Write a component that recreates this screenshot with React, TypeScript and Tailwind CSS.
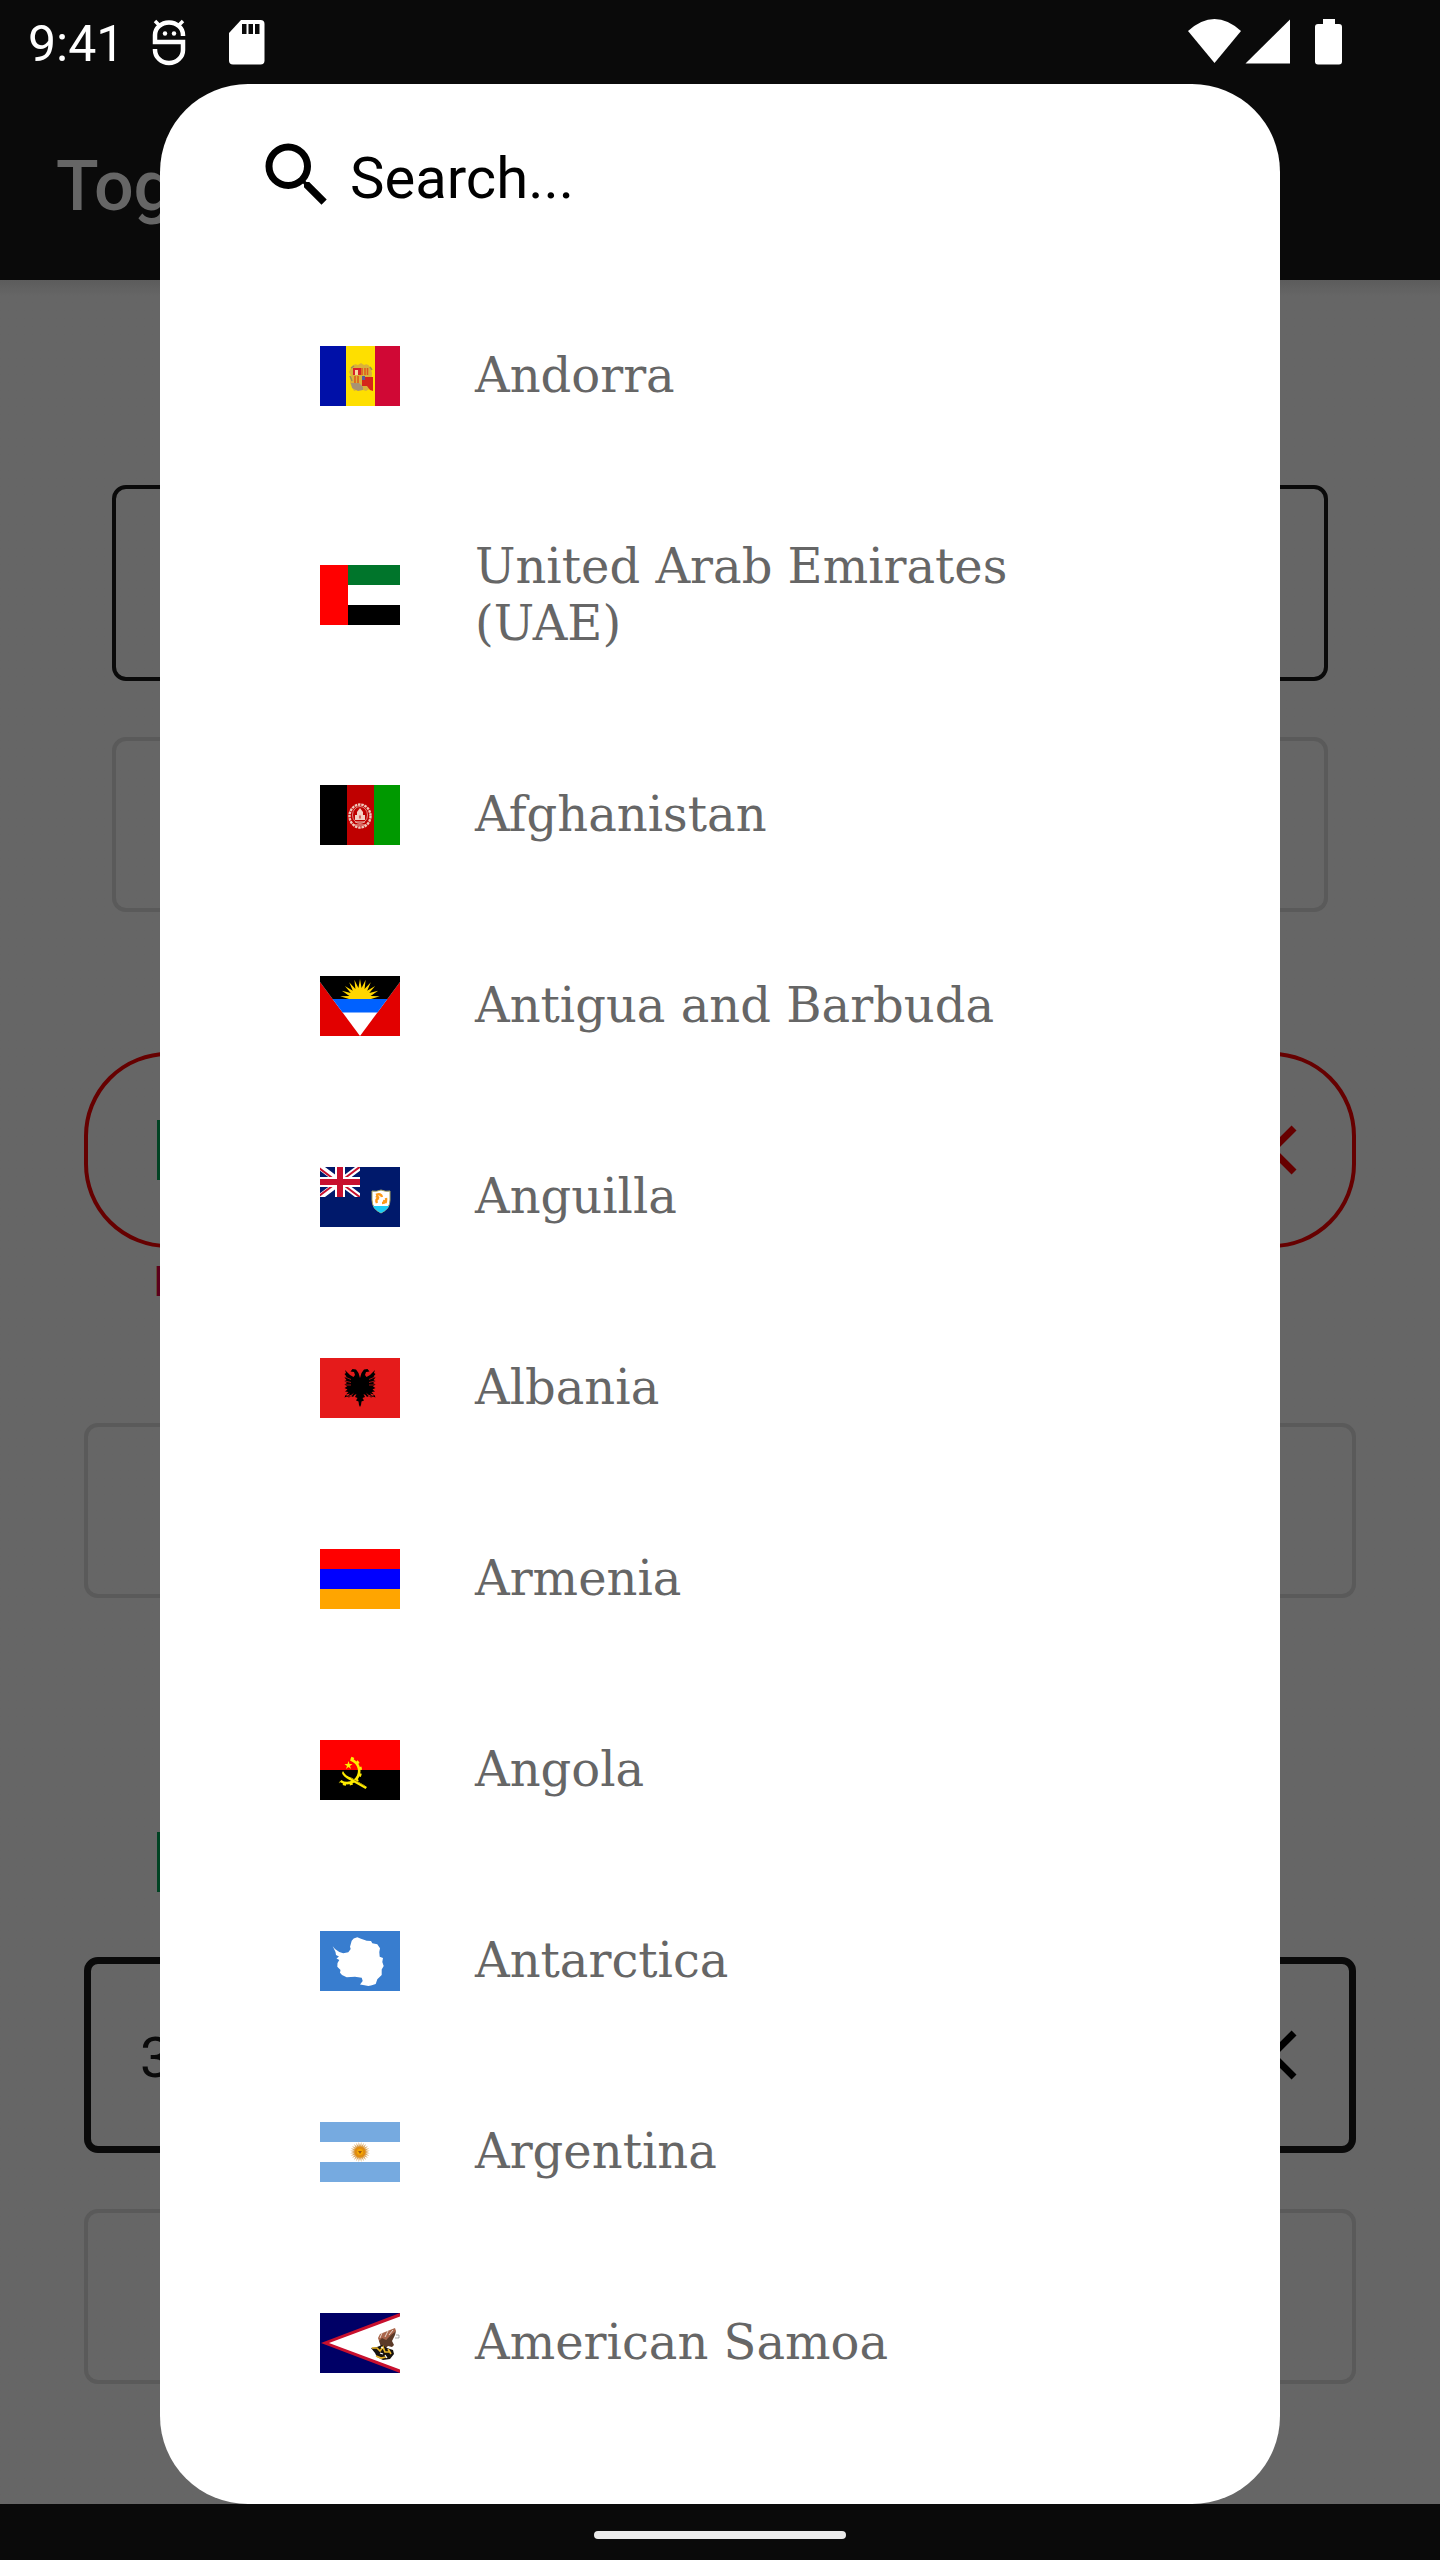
import React, { useState } from "react";

const ray = (cx: number, cy: number, inner: number, outer: number, count: number, from: number, to: number) => {
  const points: string[] = [];
  const step = (to - from) / (count * 2);
  for (let i = 0; i <= count * 2; i++) {
    const a = ((from + i * step) * Math.PI) / 180;
    const r = i % 2 === 0 ? inner : outer;
    points.push(`${(cx + r * Math.cos(a)).toFixed(2)},${(cy + r * Math.sin(a)).toFixed(2)}`);
  }
  return points.join(" ");
};

const Andorra = () => (
  <>
    <rect width="26" height="60" fill="#0010a8" />
    <rect x="26" width="29" height="60" fill="#fedf00" />
    <rect x="55" width="25" height="60" fill="#d00835" />
    <path d="M32 20q3-3 6-1l3-2 3 2q4-2 6 2l2 6-1 15-5 3-6-2-6 2-4-8 1-7-2-4z" fill="#d9b23a" />
    <path d="M31 22l3-2M50 21l2 3M30 30l2 5" stroke="#9d8a5a" strokeWidth="1.5" fill="none" />
    <rect x="33" y="22" width="8" height="7" fill="#d8202a" />
    <rect x="35" y="24" width="3" height="5" fill="#f6d9a0" />
    <path d="M42 22v7M45 22v7M47.500 22v7M35 30v7M38 30v7" stroke="#e0561d" strokeWidth="1.500" />
    <path d="M42 31h11v14l-3-1-3-4h-5z" fill="#d6261a" />
    <path d="M31 37h8l4 4v3l-5 1-6-3z" fill="#a89272" />
    <path d="M42 30h3v4h-3z" fill="#5a5a9a" />
  </>
);

const Emirates = () => (
  <>
    <rect width="80" height="60" fill="#fff" />
    <rect width="80" height="20" fill="#00752b" />
    <rect y="40" width="80" height="20" fill="#000" />
    <rect width="28" height="60" fill="#f00" />
  </>
);

const Afghanistan = () => (
  <>
    <rect width="27" height="60" fill="#000" />
    <rect x="27" width="27" height="60" fill="#bf0000" />
    <rect x="54" width="26" height="60" fill="#090" />
    <ellipse cx="40" cy="31" rx="10.500" ry="11.500" fill="none" stroke="#f0c8bb" strokeWidth="2.400" strokeDasharray="2.500 .8" />
    <ellipse cx="40" cy="30" rx="7.500" ry="8.500" fill="none" stroke="#dc8a80" strokeWidth="1" />
    <path d="M40 23l3 4v3h2v5h-10v-5h2v-3z" fill="#f2cfc4" />
    <path d="M39 30h2v4h-2zM35 37h10M34 40h12" fill="#bf0000" stroke="#f0c8bb" strokeWidth="1" />
  </>
);

const Antigua = () => (
  <>
    <rect width="80" height="60" fill="#e20000" />
    <path d="M0 0h80v6L40 60 0 6z" fill="#fff" />
    <path d="M0 0h80v6L67.400 23H12.600L0 6z" fill="#000" />
    <polygon points={ray(40, 23, 11, 20, 11, 180, 360)} fill="#ffd600" />
    <path d="M12.600 23h54.800L57.400 36.500H22.600z" fill="#0061ff" />
  </>
);

const Anguilla = () => (
  <>
    <rect width="80" height="60" fill="#00196b" />
    <svg width="40" height="30" viewBox="0 0 40 30">
      <path d="M0 0l40 30M40 0L0 30" stroke="#fff" strokeWidth="6" />
      <path d="M-1 1l20 15M21 14L41-1M-1 29l20-15M21 16l20 15" stroke="#c8102e" strokeWidth="2" />
      <path d="M20 0v30M0 15h40" stroke="#fff" strokeWidth="10" />
      <path d="M20 0v30M0 15h40" stroke="#c8102e" strokeWidth="6" />
    </svg>
    <path d="M52 24q4 1 9-1 5 2 9 1v9q0 9-9 13-9-4-9-13z" fill="#fff" stroke="#a8a45c" strokeWidth="1" />
    <path d="M53 39h16q-2 4-8 7-6-3-8-7z" fill="#1ccbf5" />
    <path d="M56 28q5-2 6 2M66 31q1 5-4 5M57 36q-2-4 2-5M56 29l3 2M63 34l4 1" fill="none" stroke="#ff9a17" strokeWidth="2.500" />
  </>
);

const Albania = () => (
  <>
    <rect width="80" height="60" fill="#e51b1b" />
    <path
      d="M40 20L38.500 15 36 11.500 32.500 11 30.500 13.500 34 14 35 17 33.500 19 30 17 25 12 26 15 24.500 16 26.500 18.500 24.500 19.500 26.500 22 24.500 23 27 25 24.500 26.500 27 28.500 24.500 30 27.500 31.500 25 33.500 28.500 34 26 36.500 30 35.500 27.500 38.500 32 36.500 34 34.500 32 37.500 29.500 38.500 25.500 37 24.500 39.500 27 38.500 29 39.500 31 38 33 39 34.500 37 36.500 36 35 39 37.500 40 36 42.500 38.500 43.500 39 47 40 49 41 47 41.500 43.500 44 42.500 42.500 40 45 39 43.500 36 45.500 37 47 39 49 38 51 39.500 53 38.500 55.500 39.500 54.500 37 50.500 38.500 48 37.500 46 34.500 48 36.500 52.500 38.500 50 35.500 54 36.500 51.500 34 55 33.500 52.500 31.500 55.500 30 53 28.500 55.500 26.500 53 25 55.500 23 53.500 22 55.500 19.500 53.500 18.500 55.500 16 54 15 55 12 50 17 46.500 19 45 17 46 14 49.500 13.500 47.500 11 44 11.500 41.500 15z"
      fill="#000"
    />
    <path d="M25 19l6 2.500M25 23l6 1.500M25 27l6 0M55 19l-6 2.500M55 23l-6 1.500M55 27l-6 0" stroke="#e51b1b" strokeWidth=".7" />
  </>
);

const Armenia = () => (
  <>
    <rect width="80" height="20" fill="#f00" />
    <rect y="20" width="80" height="20" fill="#00f" />
    <rect y="40" width="80" height="20" fill="#ffa500" />
  </>
);

const Angola = () => (
  <>
    <rect width="80" height="30" fill="#f00" />
    <rect y="30" width="80" height="30" fill="#000" />
    <path d="M30.500 19.500A12 12 0 1 1 20.500 41" fill="none" stroke="#ffec00" strokeWidth="2.600" />
    <path d="M31 18A13.500 13.500 0 1 1 19.500 42" fill="none" stroke="#ffec00" strokeWidth="2.500" strokeDasharray="3 3.600" />
    <path d="M23 31q2 5 9 7l15 9-1.500 2-15-8.500Q23 37 22 33z" fill="#ffec00" />
    <path d="M31 38l14 8" stroke="#a88f00" strokeWidth="1" />
    <polygon points="28.500,21 29.500,24 32.500,24 30,26 31,29 28.500,27 26,29 27,26 24.500,24 27.500,24" fill="#ffec00" />
  </>
);

const Antarctica = () => (
  <>
    <rect width="80" height="60" fill="#387dcf" />
    <path
      d="M12.700 15.300L15 18 19.300 21 23.300 22.300 28.300 21.300 30.700 18 30 15.700 31.700 9.700 33.700 7.500 37.300 6.300 40.300 7.500 46.700 9.700 51 10 52.300 12.300 57.300 13.300 60 17.300 59.300 21 59.700 25.700 63 27 62.300 31 63.700 35 61.700 38.500 61.700 44 57.300 48.300 55.700 53 51 54.500 48.300 55 44.500 54.300 40 53.500 42.700 50 41.700 46.700 35 45.700 26.700 46.300 22 44 20 41.700 20.500 39 17.300 35.700 17.500 32 19.300 29 16.500 27.500 19 25.500 16 24 15.500 21z"
      fill="#fff"
    />
  </>
);

const Argentina = () => (
  <>
    <rect width="80" height="60" fill="#76aae0" />
    <rect y="20" width="80" height="20" fill="#fff" />
    <polygon points={ray(40, 30, 6, 10, 24, 0, 360)} fill="#d9a45c" />
    <circle cx="40" cy="30" r="5.500" fill="#e08c10" />
    <circle cx="40" cy="30" r="3" fill="#f6a800" />
    <path d="M38 29h4l-2 3z" fill="#a05a10" />
  </>
);

const Samoa = () => (
  <>
    <rect width="80" height="60" fill="#006" />
    <path d="M1 30L80 0v60z" fill="#c8102e" />
    <path d="M9 30L80 3.500v53z" fill="#fff" />
    <path d="M58 25l2-4 5-2 5-2 5-2 1 3-4 5-4 3-5 3-4-1z" fill="#a9654a" />
    <path d="M59 28l3-3 4 2 5-5 5-4-1 4-3 6 2 4-2 2-4-1-3 3-4-2z" fill="#5b3a28" />
    <path d="M60 25l2-5M65 24l3-6M69 22l4-5" stroke="#e8d8cc" strokeWidth="1" />
    <path d="M51 35l6-1 5-2 5 3 6 2 1 4-4 5-7 1-6-3-2-4z" fill="#18130f" />
    <path d="M52 35l5 0 3 3 3-4 2 5 5 0M56 43l5 2 5-1M68 36l3 5" stroke="#e8b52a" strokeWidth="1.700" fill="none" />
    <path d="M60 40l3 1M65 42l2 3M61 34l2 1" stroke="#fff" strokeWidth="1.200" />
    <path d="M76 22l3 0 0 3-4 0" stroke="#888" strokeWidth=".7" fill="none" />
  </>
);

const countries: { name: string; flag: () => React.JSX.Element }[] = [
  { name: "Andorra", flag: Andorra },
  { name: "United Arab Emirates (UAE)", flag: Emirates },
  { name: "Afghanistan", flag: Afghanistan },
  { name: "Antigua and Barbuda", flag: Antigua },
  { name: "Anguilla", flag: Anguilla },
  { name: "Albania", flag: Albania },
  { name: "Armenia", flag: Armenia },
  { name: "Angola", flag: Angola },
  { name: "Antarctica", flag: Antarctica },
  { name: "Argentina", flag: Argentina },
  { name: "American Samoa", flag: Samoa },
];

function StatusBar() {
  return (
    <header className="flex h-[84px] items-start justify-between bg-[#0a0a0a] pr-[97px] pl-7 text-white">
      <div className="flex items-start">
        <span className="mt-4 text-[50px] leading-14">9:41</span>
        <svg className="mt-[18px] ml-[26px]" width="38" height="48" viewBox="150 18 38 48" fill="none" stroke="#fff">
          <path d="M183 36v-1a14 12.500 0 0 0-28 0v7h28v8a14 13 0 0 1-28 0v-1" strokeWidth="4.500" />
          <path d="M155 21l5 5M183 21l-5 5" strokeWidth="3.500" />
          <circle cx="165" cy="33.500" r="2.200" fill="#fff" stroke="none" />
          <circle cx="174" cy="33.500" r="2.200" fill="#fff" stroke="none" />
        </svg>
        <svg className="mt-[18px] ml-10" width="38" height="48" viewBox="228 18 38 48">
          <path
            d="M241 20h19.500q4 0 4 4v36.500q0 4-4 4H233q-4 0-4-4V33z"
            fill="#fff"
          />
          <path d="M242 24h4.500v10H242zM248.500 24h4.500v10h-4.500zM255 24h4.500v10H255z" fill="#0a0a0a" />
        </svg>
      </div>
      <svg className="mt-[18px]" width="156" height="48" viewBox="1187 18 156 48" fill="#fff">
        <path d="M1188 31Q1214.500 7 1241 31L1214.500 63z" />
        <path d="M1290 19.500V63.500H1245.500z" />
        <path d="M1323 19h12v5h4q3 0 3 3v34.500q0 3-3 3h-21q-3 0-3-3V27q0-3 3-3h5z" />
      </svg>
    </header>
  );
}

function CloseIcon() {
  return (
    <svg width="84" height="84" viewBox="0 0 24 24" fill="currentColor">
      <path d="M19 6.410L17.590 5 12 10.590 6.410 5 5 6.410 10.590 12 5 17.590 6.410 19 12 13.410 17.590 19 19 17.590 13.410 12z" />
    </svg>
  );
}

function DimmedFlag() {
  return (
    <svg width="80" height="60" viewBox="0 0 80 60">
      <rect width="80" height="60" fill="#666" />
      <rect width="27" height="60" fill="#004323" />
      <rect x="53" width="27" height="60" fill="#004323" />
    </svg>
  );
}

function FormBehind() {
  return (
    <div className="col-start-1 row-start-1 flex flex-col" aria-hidden="true">
      <div className="flex h-[196px] items-center bg-[#0a0a0a] px-14 pt-2">
        <span className="text-[70px] font-medium text-[#666]">Tog</span>
      </div>
      <div className="h-4 bg-linear-to-b from-[#5c5c5c] to-[#666]" />
      <div className="mt-[189px] flex flex-col gap-14 px-28">
        <div className="h-[196px] rounded-[14px] border-4 border-[#0a0a0a]" />
        <div className="h-[175px] rounded-[14px] border-4 border-[#5a5a5a]" />
      </div>
      <div className="mt-[140px] px-[84px]">
        <div className="flex h-[196px] items-center justify-between rounded-[84px] border-4 border-[#600] pr-[38px] pl-[69px] text-[#600]">
          <DimmedFlag />
          <CloseIcon />
        </div>
        <p className="h-[175px] px-[69px] pt-0.5 text-[42px] text-[#5c001c]">I</p>
        <div className="h-[175px] rounded-[14px] border-4 border-[#5a5a5a]" />
      </div>
      <div className="mt-[234px] flex flex-col px-[84px]">
        <div className="pl-[73px]">
          <DimmedFlag />
        </div>
        <div className="mt-[65px] flex h-[196px] items-center justify-between rounded-[14px] border-7 border-[#0a0a0a] pr-[35px] pl-[49px] text-black">
          <span className="pt-1.5 text-[56px] text-[#0a0a0a]">3</span>
          <CloseIcon />
        </div>
        <div className="mt-14 h-[175px] rounded-[14px] border-4 border-[#5a5a5a]" />
      </div>
    </div>
  );
}

function CountryDialog() {
  const [query, setQuery] = useState("");
  const shown = countries.filter((c) => c.name.toLowerCase().includes(query.toLowerCase()));
  return (
    <section
      role="dialog"
      aria-label="Select country"
      className="z-10 col-start-1 row-start-1 mx-40 flex flex-col rounded-[88px] bg-white pt-[49px] pb-[66px]"
    >
      <div className="flex items-start px-[95px]">
        <label htmlFor="country-search" aria-label="Search countries">
          <svg width="84" height="84" viewBox="0 0 24 24" fill="#000">
            <path d="M15.500 14h-.79l-.28-.27A6.471 6.471 0 0 0 16 9.500 6.500 6.500 0 1 0 9.500 16c1.610 0 3.090-.59 4.230-1.570l.27.28v.79l5 4.990L20.490 19l-4.990-5zm-6 0C7.010 14 5 11.990 5 9.500S7.010 5 9.500 5 14 7.010 14 9.500 11.990 14 9.500 14z" />
          </svg>
        </label>
        <input
          id="country-search"
          type="text"
          value={query}
          onChange={(e) => setQuery(e.target.value)}
          placeholder="Search..."
          className="ml-[11px] h-[90px] min-w-0 flex-1 bg-transparent text-[58px] text-black outline-none placeholder:text-black"
        />
      </div>
      <ul className="mt-[57px]">
        {shown.map(({ name, flag: Flag }) => (
          <li key={name}>
            <button type="button" className="flex w-full items-center gap-[75px] px-40 text-left">
              <svg className="shrink-0" width="80" height="60" viewBox="0 0 80 60" aria-hidden="true">
                <Flag />
              </svg>
              <span className="py-[67px] font-['DejaVu_Serif',serif] text-[48px] leading-[57px] text-[#666]">
                {name}
              </span>
            </button>
          </li>
        ))}
      </ul>
    </section>
  );
}

export default function App() {
  return (
    <div className="flex min-h-screen flex-col bg-[#666] font-[Roboto,sans-serif]">
      <StatusBar />
      <main className="grid flex-1 bg-linear-to-b from-[#0a0a0a] from-[196px] to-[#666] to-[196px]">
        <FormBehind />
        <CountryDialog />
      </main>
      <footer className="flex h-14 items-start justify-center bg-[#0a0a0a] pt-[27px]">
        <div className="h-2 w-[252px] rounded-full bg-[#ebebeb]" />
      </footer>
    </div>
  );
}
